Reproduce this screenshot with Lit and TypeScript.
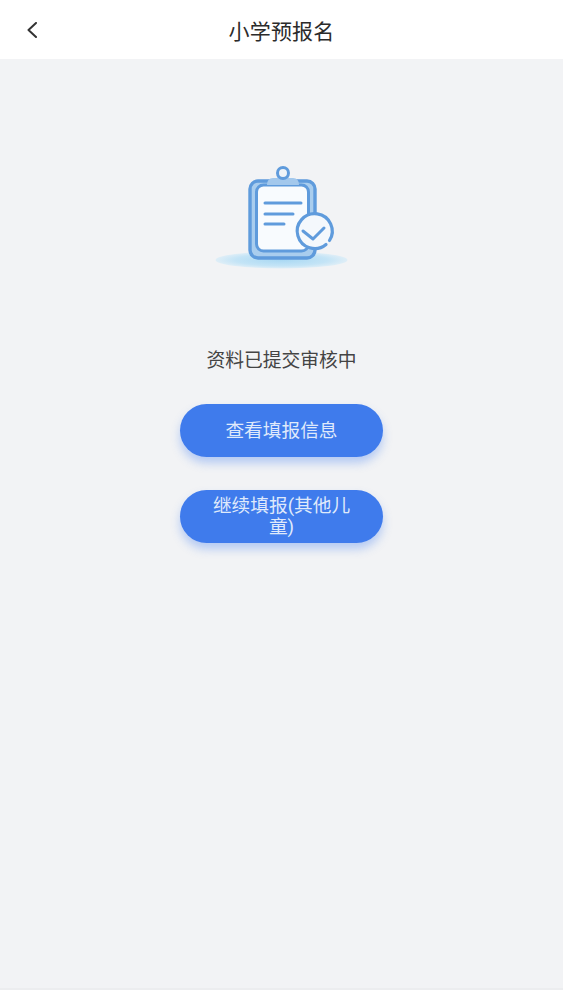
import { LitElement, html, css, svg } from "lit";
import { customElement } from "lit/decorators.js";

const illustration = svg`
<svg width="140" height="110" viewBox="0 0 140 110" fill="none">
  <defs>
    <radialGradient id="pool" cx="50%" cy="50%" r="50%">
      <stop offset="0" stop-color="#a9d8f3"/>
      <stop offset="0.7" stop-color="#c4e4f6"/>
      <stop offset="1" stop-color="#dfeef7"/>
    </radialGradient>
  </defs>
  <ellipse cx="69.5" cy="100" rx="66" ry="8.5" fill="url(#pool)"/>
  <rect x="38" y="21" width="65" height="77" rx="8" fill="#a9cdee" stroke="#5f9bdc" stroke-width="3.4"/>
  <rect x="44.5" y="25" width="52" height="66" rx="7" fill="#f8fbfe" stroke="#5f9bdc" stroke-width="3"/>
  <path d="M55 25c0-4 2-7 6-7h4c1-1 1-2 1-3h10c0 1 0 2 1 3h4c4 0 6 3 6 7z" fill="#a3c8ec"/>
  <circle cx="71" cy="13" r="5.5" fill="#eef3f8" stroke="#5f9bdc" stroke-width="3"/>
  <path d="M53 43h36M53 54h28M53 64h19" stroke="#5f9bdc" stroke-width="3" stroke-linecap="round"/>
  <circle cx="103" cy="71" r="17.5" fill="#f4f8fc"/>
  <path d="M114 84.5A17.5 17.5 0 1 1 117.5 80.5" stroke="#5f9bdc" stroke-width="3.2" stroke-linecap="round"/>
  <path d="M91 71l10 8 11-11" stroke="#5f9bdc" stroke-width="3" stroke-linecap="round" stroke-linejoin="round"/>
</svg>`;

@customElement("app-root")
export class AppRoot extends LitElement {
  static styles = css`
    :host {
      display: flex;
      flex-direction: column;
      min-height: 990px;
      background: #f2f3f5;
      font-family: "Roboto", "Noto Sans CJK SC", sans-serif;
      box-sizing: border-box;
      border-bottom: 2px solid #ecedef;
    }
    .nav {
      height: 59px;
      background: #fff;
      display: grid;
      grid-template-columns: 60px 1fr 60px;
      align-items: center;
    }
    .back {
      display: flex;
      padding-left: 27px;
      margin-top: 1px;
    }
    .title {
      text-align: center;
      font-size: 21px;
      color: #2b2b2b;
      font-weight: 400;
      letter-spacing: 0.2px;
    }
    .main {
      display: flex;
      flex-direction: column;
      align-items: center;
    }
    .art {
      display: flex;
      margin-top: 101px;
      margin-left: 1px;
    }
    .status {
      margin-top: 78px;
      font-size: 18.8px;
      line-height: 26px;
      color: #444;
    }
    .btn {
      width: 203px;
      height: 53px;
      border-radius: 27px;
      background: #3f7bec;
      color: #dfe9fb;
      font: inherit;
      font-size: 18.7px;
      line-height: 21px;
      border: none;
      box-shadow: 0 6px 10px rgba(63, 124, 240, 0.34);
      display: flex;
      align-items: center;
      justify-content: center;
      text-align: center;
      padding: 1px 26px 0;
      box-sizing: border-box;
    }
    .first {
      margin-top: 30px;
    }
    .second {
      margin-top: 33px;
    }
  `;

  render() {
    return html`
      <header class="nav">
        <span class="back">
          <svg width="11" height="16" viewBox="0 0 11 16" fill="none">
            <path d="M9 1L1.5 8L9 15" stroke="#333" stroke-width="2" stroke-linecap="round" stroke-linejoin="round"/>
          </svg>
        </span>
        <div class="title">小学预报名</div>
        <span></span>
      </header>
      <main class="main">
        <div class="art">${illustration}</div>
        <div class="status">资料已提交审核中</div>
        <button class="btn first">查看填报信息</button>
        <button class="btn second">继续填报(其他儿童)</button>
      </main>
    `;
  }
}
